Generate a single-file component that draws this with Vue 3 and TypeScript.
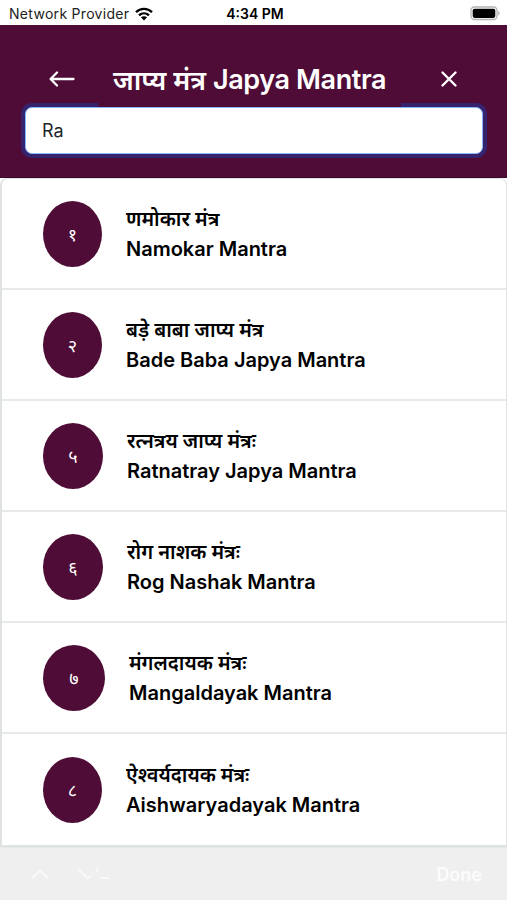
<script setup lang="ts">
import { ref } from 'vue'

interface Mantra {
  numeral: string
  hindi: string
  english: string
  size: string
}

const query = ref('Ra')

const mantras: Mantra[] = [
  { numeral: '१', hindi: 'णमोकार मंत्र', english: 'Namokar Mantra', size: 'narrow' },
  { numeral: '२', hindi: 'बड़े बाबा जाप्य मंत्र', english: 'Bade Baba Japya Mantra', size: 'narrow' },
  { numeral: '५', hindi: 'रत्नत्रय जाप्य मंत्रः', english: 'Ratnatray Japya Mantra', size: 'medium' },
  { numeral: '६', hindi: 'रोग नाशक मंत्रः', english: 'Rog Nashak Mantra', size: 'medium' },
  { numeral: '७', hindi: 'मंगलदायक मंत्रः', english: 'Mangaldayak Mantra', size: 'wide' },
  { numeral: '८', hindi: 'ऐश्वर्यदायक मंत्रः', english: 'Aishwaryadayak Mantra', size: 'narrow' },
]
</script>

<template>
  <div class="screen">
    <div class="status">
      <div class="carrier">
        <span>Network Provider</span>
        <svg class="wifi" width="20" height="14" viewBox="0 0 20 14">
          <path d="M2 5.2C6.6.8 13.4.8 18 5.2M5 8.3c2.9-2.7 7.100-2.700 10 0" fill="none" stroke="#000" stroke-width="2.300" />
          <path d="M6.900 10.300c1.800-1.500 4.400-1.500 6.200 0L10 13.500z" fill="#000" />
        </svg>
      </div>
      <span class="clock">4:34 PM</span>
      <svg class="battery" width="31" height="15" viewBox="0 0 31 15">
        <rect x="1" y="1" width="26" height="12.500" rx="3.500" fill="#fff" stroke="#b3b3b3" stroke-width="1.300" />
        <rect x="2.700" y="2.700" width="22.600" height="9.200" rx="1.800" fill="#000" />
        <path d="M28.200 5c2 .8 2 3.700 0 4.500z" fill="#b3b3b3" />
      </svg>
    </div>

    <header class="header">
      <div class="bar">
        <button class="icon" aria-label="Back">
          <svg width="26" height="18" viewBox="0 0 26 18">
            <path d="M24.500 9H2M8 2.500L1.600 9 8 15.500" fill="none" stroke="#fff" stroke-width="2.300" stroke-linecap="round" stroke-linejoin="round" />
          </svg>
        </button>
        <h1 class="title"><span>जाप्य मंत्र</span> <span class="latin">Japya Mantra</span></h1>
        <button class="icon" aria-label="Close">
          <svg width="18" height="18" viewBox="0 0 18 18">
            <path d="M2.500 2.500l13 13M15.500 2.500l-13 13" fill="none" stroke="#fff" stroke-width="2.400" stroke-linecap="round" />
          </svg>
        </button>
      </div>
      <input v-model="query" class="search" type="text" />
    </header>

    <ul class="list">
      <li v-for="m in mantras" :key="m.numeral" class="row">
        <span class="badge" :class="m.size">{{ m.numeral }}</span>
        <div class="names">
          <span class="hindi">{{ m.hindi }}</span>
          <span class="english">{{ m.english }}</span>
        </div>
      </li>
    </ul>

    <footer class="toolbar">
      <svg width="18" height="12" viewBox="0 0 18 12"><path d="M1.500 10L9 2.500l7.500 7.500" /></svg>
      <svg class="down" width="32" height="14" viewBox="0 0 32 14"><path d="M1 2l9.500 9.500L15 8M20 1v4M23 11h10" /></svg>
      <span class="done">Done</span>
    </footer>
  </div>
</template>

<style>
body {
  margin: 0;
  background: #fff;
}
</style>

<style scoped>
.screen {
  width: 507px;
  height: 900px;
  display: flex;
  flex-direction: column;
  overflow: hidden;
  background: #fff;
  font-family: Inter, 'Noto Sans', sans-serif;
  color: #000;
}
.status {
  height: 25px;
  flex: none;
  display: grid;
  grid-template-columns: 1fr auto 1fr;
  align-items: center;
  padding: 2px 6px 0 9px;
  box-sizing: border-box;
  font-size: 14px;
}
.carrier {
  display: flex;
  align-items: center;
  gap: 5px;
  color: #222;
  letter-spacing: 0.3px;
}
.clock {
  font-weight: 600;
  font-size: 14px;
}
.battery {
  justify-self: end;
}
.header {
  height: 153px;
  flex: none;
  box-sizing: border-box;
  padding: 26px 25px 0;
  background: #4e0c36;
  border-bottom: 1px solid #3d092a;
}
.bar {
  position: relative;
  z-index: 1;
  height: 56px;
  display: flex;
  align-items: center;
}
.icon {
  width: 73px;
  height: 50px;
  flex: none;
  padding: 0;
  border: 0;
  background: none;
  display: flex;
  align-items: center;
  justify-content: center;
}
.title {
  width: 303px;
  height: 56px;
  flex: none;
  margin: 0;
  display: flex;
  align-items: center;
  justify-content: center;
  gap: 7px;
  background: #4e0c36;
  color: #fff;
  font-size: 27px;
  font-weight: 600;
  white-space: nowrap;
}
.latin {
  letter-spacing: -0.4px;
}
.icon:last-child {
  width: 95px;
}
.search {
  display: block;
  width: 458px;
  height: 47px;
  box-sizing: border-box;
  padding: 0 16px;
  border: 1px solid #86b7fe;
  border-radius: 7px;
  outline: none;
  background: #fff;
  box-shadow: 0 0 0 4px #35236d;
  color: #212529;
  font: 400 18px Inter, sans-serif;
}
.list {
  height: 669px;
  flex: none;
  box-sizing: border-box;
  margin: 0;
  padding: 0;
  list-style: none;
  border: 2px solid #dfe2e3;
  border-top-width: 1px;
  border-right-width: 1px;
  border-radius: 7px 7px 0 0;
  display: grid;
  grid-template-rows: repeat(6, 1fr);
}
.row {
  display: flex;
  align-items: center;
  padding-left: 41px;
  border-bottom: 2px solid #e6eaeb;
}
.row:last-child {
  border-bottom: 0;
}
.badge {
  height: 66px;
  border-radius: 50%;
  background: #4e0c36;
  color: #fff;
  font-size: 18px;
  display: flex;
  align-items: center;
  justify-content: center;
}
.narrow {
  width: 59px;
}
.medium {
  width: 60px;
}
.wide {
  width: 62px;
}
.names {
  display: flex;
  flex-direction: column;
  margin-left: 24px;
  font-size: 20px;
  font-weight: 600;
  line-height: 30px;
  white-space: nowrap;
}
.toolbar {
  flex: 1;
  display: flex;
  align-items: center;
  padding: 0 25px 0 31px;
  background: #efefef;
  border-top: 1px solid #e6e9e9;
}
.toolbar path {
  fill: none;
  stroke: #f9f9f9;
  stroke-width: 1.800;
}
.down {
  margin-left: 28px;
}
.done {
  margin-left: auto;
  color: #fcfcfc;
  font-size: 18px;
  font-weight: 600;
}
</style>
